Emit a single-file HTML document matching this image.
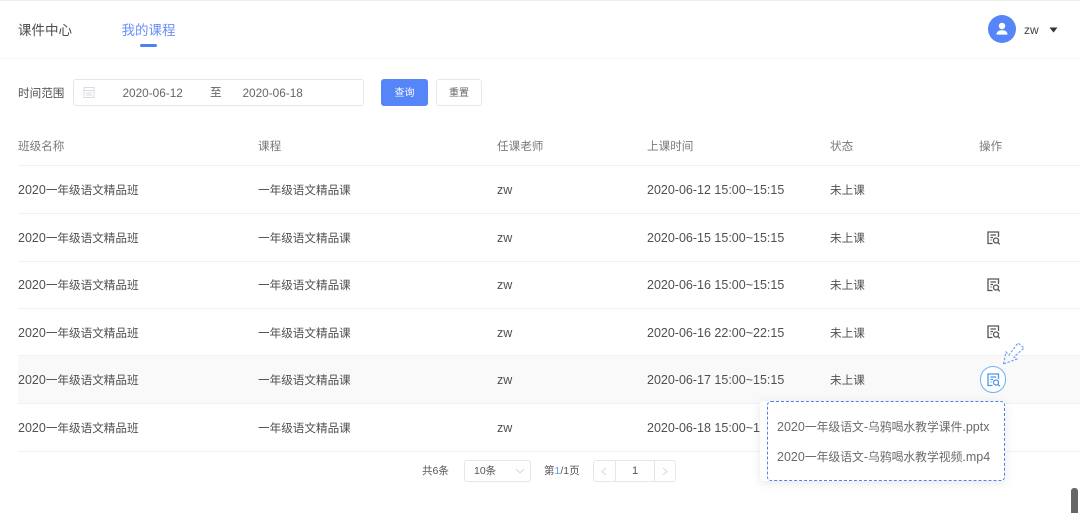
<!DOCTYPE html>
<html lang="zh"><head><meta charset="utf-8"><style>
*{box-sizing:border-box}
html,body{margin:0;padding:0;width:1080px;height:513px;overflow:hidden;background:#fff}
body{position:relative;font-family:"Liberation Sans","Noto Sans CJK SC",sans-serif;font-size:11.6px;color:#555}
.a{position:absolute;white-space:nowrap}
.t{line-height:16px;color:#505050}
.h{line-height:16px;color:#7a7a7a;margin-top:1px}
.c{margin-top:1px}
.n{font-size:12.500px}
.l{position:absolute;left:18px;right:0;height:1px;background:#f0f1f4}
svg{position:absolute;overflow:visible}
</style></head><body>
<div class="a" style="left:0;top:0;width:1080px;height:1px;background:#eee"></div>
<div class="a" style="left:0;top:58px;width:1080px;height:1px;background:#f7f7f7"></div>
<div class="a" style="left:18px;top:21px;font-size:13.500px;line-height:20px;color:#4c4c4c">课件中心</div>
<div class="a" style="left:121.500px;top:21px;font-size:13.500px;line-height:20px;color:#6a8ef5">我的课程</div>
<div class="a" style="left:140px;top:44px;width:17px;height:3px;border-radius:2px;background:#4f7ff5"></div>

<div class="a" style="left:988px;top:15px;width:28px;height:28px;border-radius:50%;background:#5585f6"></div>
<svg style="left:988px;top:15px" width="28" height="28"><circle cx="14" cy="11" r="3.200" fill="#fff"/><path d="M8.500 19.600c0-3.200 2.400-4.400 5.500-4.400s5.500 1.200 5.500 4.400z" fill="#fff"/></svg>
<div class="a" style="left:1024px;top:22px;line-height:16px;color:#444;font-size:12px">zw</div>
<svg style="left:1049px;top:27px" width="9" height="6"><path d="M0.500 0.500h8l-4 5z" fill="#333"/></svg>

<div class="a t c" style="left:18px;top:85px">时间范围</div>
<div class="a" style="left:73px;top:79px;width:291px;height:27px;border:1px solid #e6e6e8;border-radius:3px"></div>
<svg style="left:83px;top:86px" width="12" height="12" fill="none" stroke="#d9dbe1"><rect x="1" y="1.500" width="10" height="10"/><path d="M1 4.500h10M3 7h6M3 9h6"/></svg>
<div class="a t" style="left:122.500px;top:85px;color:#666;font-size:11.800px">2020-06-12</div>
<div class="a t" style="left:210px;top:85px;color:#666">至</div>
<div class="a t" style="left:242.500px;top:85px;color:#666;font-size:11.800px">2020-06-18</div>
<div class="a" style="left:381px;top:79px;width:47px;height:27px;border-radius:3px;background:#5585f6;color:#fff;font-size:10px;line-height:29px;text-align:center">查询</div>
<div class="a" style="left:436px;top:79px;width:46px;height:27px;border-radius:3px;border:1px solid #e8e8ea;color:#666;font-size:10px;line-height:27px;text-align:center">重置</div>

<div class="a h" style="left:18px;top:138px">班级名称</div>
<div class="a h" style="left:258px;top:138px">课程</div>
<div class="a h" style="left:497px;top:138px">任课老师</div>
<div class="a h" style="left:647px;top:138px">上课时间</div>
<div class="a h" style="left:830px;top:138px">状态</div>
<div class="a h" style="left:979px;top:138px">操作</div>
<div class="l" style="top:165px"></div>

<div class="a" style="left:18px;top:356px;width:1062px;height:47px;background:#f9f9f9"></div>
<div class="l" style="top:213px"></div><div class="l" style="top:261px"></div><div class="l" style="top:308px"></div><div class="l" style="top:355px"></div><div class="l" style="top:403px"></div><div class="l" style="top:451px"></div>

<div class="a t" style="left:18px;top:182px"><span class="n">2020</span>一年级语文精品班</div><div class="a t c" style="left:258px;top:182px">一年级语文精品课</div><div class="a t n" style="left:497px;top:182px">zw</div><div class="a t n" style="left:647px;top:182px">2020-06-12 15:00~15:15</div><div class="a t c" style="left:830px;top:182px">未上课</div>
<div class="a t" style="left:18px;top:230px"><span class="n">2020</span>一年级语文精品班</div><div class="a t c" style="left:258px;top:230px">一年级语文精品课</div><div class="a t n" style="left:497px;top:230px">zw</div><div class="a t n" style="left:647px;top:230px">2020-06-15 15:00~15:15</div><div class="a t c" style="left:830px;top:230px">未上课</div>
<div class="a t" style="left:18px;top:277px"><span class="n">2020</span>一年级语文精品班</div><div class="a t c" style="left:258px;top:277px">一年级语文精品课</div><div class="a t n" style="left:497px;top:277px">zw</div><div class="a t n" style="left:647px;top:277px">2020-06-16 15:00~15:15</div><div class="a t c" style="left:830px;top:277px">未上课</div>
<div class="a t" style="left:18px;top:325px"><span class="n">2020</span>一年级语文精品班</div><div class="a t c" style="left:258px;top:325px">一年级语文精品课</div><div class="a t n" style="left:497px;top:325px">zw</div><div class="a t n" style="left:647px;top:325px">2020-06-16 22:00~22:15</div><div class="a t c" style="left:830px;top:325px">未上课</div>
<div class="a t" style="left:18px;top:372px"><span class="n">2020</span>一年级语文精品班</div><div class="a t c" style="left:258px;top:372px">一年级语文精品课</div><div class="a t n" style="left:497px;top:372px">zw</div><div class="a t n" style="left:647px;top:372px">2020-06-17 15:00~15:15</div><div class="a t c" style="left:830px;top:372px">未上课</div>
<div class="a t" style="left:18px;top:420px"><span class="n">2020</span>一年级语文精品班</div><div class="a t c" style="left:258px;top:420px">一年级语文精品课</div><div class="a t n" style="left:497px;top:420px">zw</div><div class="a t n" style="left:647px;top:420px">2020-06-18 15:00~15:15</div><div class="a t c" style="left:830px;top:420px">未上课</div>

<svg style="left:987px;top:231px" width="14" height="14" fill="none" stroke="#555" stroke-width="1.300"><path d="M5.500 12.500H1V1h10.500v5"/><path d="M3.500 4h5.500M3.500 6.500h2.500M3.500 9h1"/><circle cx="9" cy="9.500" r="2.500"/><path d="M10.800 11.300l2 2"/></svg>
<svg style="left:987px;top:278px" width="14" height="14" fill="none" stroke="#555" stroke-width="1.300"><path d="M5.500 12.500H1V1h10.500v5"/><path d="M3.500 4h5.500M3.500 6.500h2.500M3.500 9h1"/><circle cx="9" cy="9.500" r="2.500"/><path d="M10.800 11.300l2 2"/></svg>
<svg style="left:987px;top:325px" width="14" height="14" fill="none" stroke="#555" stroke-width="1.300"><path d="M5.500 12.500H1V1h10.500v5"/><path d="M3.500 4h5.500M3.500 6.500h2.500M3.500 9h1"/><circle cx="9" cy="9.500" r="2.500"/><path d="M10.800 11.300l2 2"/></svg>
<div class="a" style="left:979.500px;top:366px;width:26.500px;height:26.500px;border-radius:50%;border:1px solid #6fb2f7;background:#fff"></div>
<svg style="left:986.500px;top:372.500px" width="14" height="14" fill="none" stroke="#4a97ea" stroke-width="1.300"><path d="M5.500 12.500H1V1h10.500v5"/><path d="M3.500 4h5.500M3.500 6.500h2.500M3.500 9h1"/><circle cx="9" cy="9.500" r="2.500"/><path d="M10.800 11.300l2 2"/></svg>
<svg style="left:1003px;top:342px" width="23" height="23" fill="none" stroke="#6f97f8" stroke-width="1.100" stroke-dasharray="2.500 1.500"><path d="M0.500 22L3 10l3 3L15 1l6 5-10 9 3 2z"/></svg>

<div class="a" style="left:422px;top:464px;font-size:10.500px;line-height:15px;color:#555">共6条</div>
<div class="a" style="left:464px;top:460px;width:67px;height:22px;border:1px solid #e6e6e8;border-radius:3px;padding-left:9px;font-size:10.500px;line-height:20px;color:#555">10条</div>
<svg style="left:515px;top:468px" width="10" height="6" fill="none" stroke="#d5d8df"><path d="M1 1l4 4 4-4"/></svg>
<div class="a" style="left:544px;top:464px;font-size:10.500px;line-height:15px;color:#555">第<span style="color:#5b9cf0">1</span>/1页</div>
<div class="a" style="left:593px;top:460px;width:83px;height:22px;border:1px solid #e6e6e8;border-radius:3px"></div>
<div class="a" style="left:615px;top:460px;width:1px;height:22px;background:#e6e6e8"></div>
<div class="a" style="left:654px;top:460px;width:1px;height:22px;background:#e6e6e8"></div>
<div class="a" style="left:616px;top:460px;width:38px;height:22px;text-align:center;font-size:11px;line-height:22px;color:#555">1</div>
<svg style="left:601px;top:467px" width="6" height="9" fill="none" stroke="#d5d8df"><path d="M5 1L1 4.500 5 8"/></svg>
<svg style="left:662px;top:467px" width="6" height="9" fill="none" stroke="#d5d8df"><path d="M1 1l4 3.500L1 8"/></svg>

<div class="a" style="left:760px;top:401px;width:245px;height:80px;background:#fff;border-radius:4px;box-shadow:0 2px 10px rgba(0,0,0,.1)"></div>
<div class="a" style="left:767px;top:401px;width:238px;height:80px;border:1px dashed #4f7ff5;border-radius:4px"></div>
<div class="a" style="left:777px;top:419px;line-height:16px;color:#6a6a6a;font-size:11.800px"><span class="n">2020</span>一年级语文<span class="n">-</span>乌鸦喝水教学课件<span class="n">.pptx</span></div>
<div class="a" style="left:777px;top:449px;line-height:16px;color:#6a6a6a;font-size:11.800px"><span class="n">2020</span>一年级语文<span class="n">-</span>乌鸦喝水教学视频<span class="n">.mp4</span></div>
<div class="a" style="left:1071px;top:488px;width:7px;height:25px;border-radius:3px 3px 0 0;background:#666"></div>
</body></html>
